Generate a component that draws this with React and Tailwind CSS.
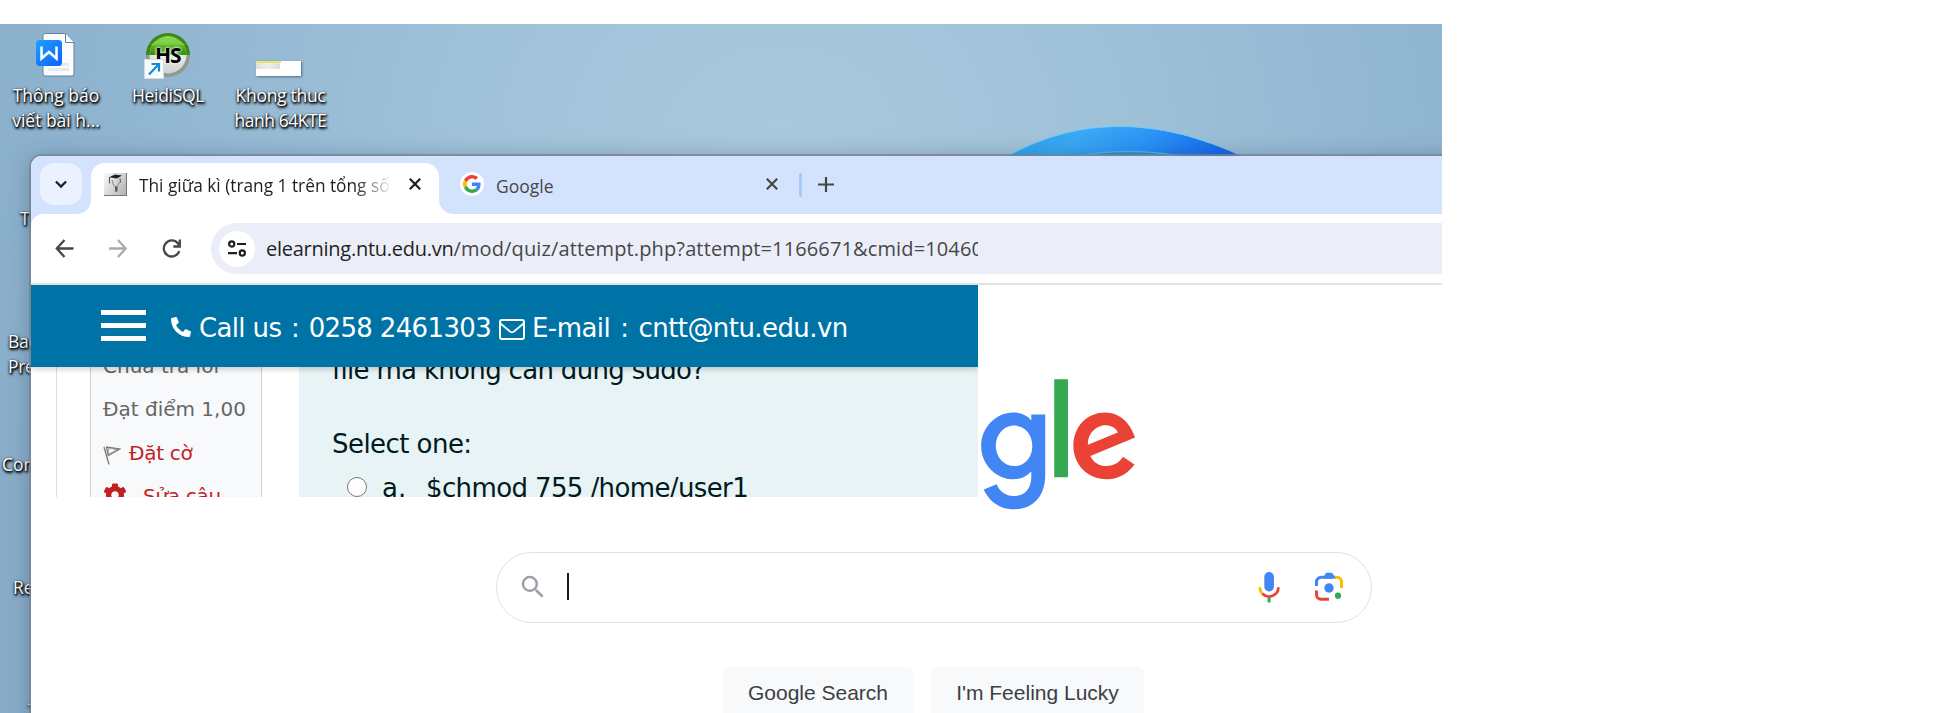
import React from "react";
import { FaPhone, FaCog } from "react-icons/fa";
import { MdSearch } from "react-icons/md";

const shadowText =
  "[text-shadow:1px_1px_2px_#000,0_1px_3px_#000,1px_2px_3px_rgba(0,0,0,0.7)]";

function DesktopLabel({ className, children }) {
  return (
    <div
      className={`absolute whitespace-pre text-center font-['Open_Sans','Noto_Sans',sans-serif] text-[17.5px] leading-[25px] text-white ${shadowText} ${className}`}
    >
      {children}
    </div>
  );
}

function WordIcon() {
  return (
    <svg className="absolute left-[35px] top-[8px]" width="42" height="46" viewBox="0 0 42 46">
      <defs>
        <linearGradient id="word" x1="0" y1="0" x2="1" y2="1">
          <stop offset="0" stopColor="#1ea0ff" />
          <stop offset="1" stopColor="#0b62ff" />
        </linearGradient>
      </defs>
      <path d="M10 1.500h20.500L39 10.500V42a2 2 0 0 1-2 2H10a2 2 0 0 1-2-2V3.500a2 2 0 0 1 2-2z" fill="#fbfcfe" stroke="#66829f" />
      <path d="M30.500 1.500V10.500H39" fill="#fff" stroke="#66829f" />
      <path d="M27 32.500h7M13 37.500h21" stroke="#e6e9ee" strokeWidth="2.800" />
      <rect x="1" y="8" width="26" height="26" rx="3.500" fill="url(#word)" />
      <path d="M6.500 14.500v12l7.500-6.500 7.500 6.500v-12" fill="none" stroke="#fff" strokeWidth="2.500" />
    </svg>
  );
}

function HeidiIcon() {
  return (
    <div className="absolute left-[143px] top-[8px] h-[48px] w-[50px]">
      <svg width="50" height="48" viewBox="0 0 50 48">
        <defs>
          <linearGradient id="hg" x1="0" y1="0" x2="0" y2="1">
            <stop offset="0" stopColor="#8bdc4f" />
            <stop offset="1" stopColor="#2f8a04" />
          </linearGradient>
          <linearGradient id="hw" x1="0" y1="0" x2="0" y2="1">
            <stop offset="0" stopColor="#fff" />
            <stop offset="1" stopColor="#cfd2ce" />
          </linearGradient>
        </defs>
        <circle cx="25" cy="23" r="22" fill="#92998c" />
        <path d="M3 23a22 22 0 0 1 44 0z" fill="#3c8a14" />
        <circle cx="25" cy="23" r="18.500" fill="url(#hw)" />
        <path d="M6.500 23a18.500 18.500 0 0 1 37 0z" fill="url(#hg)" />
        <path d="M7 13a21 12 0 0 1 36 0z" fill="#9be36a" opacity=".4" />
      </svg>
      <span className="absolute left-[12px] top-[10px] font-['Open_Sans','Noto_Sans',sans-serif] text-[21px] font-bold leading-[26px] tracking-[-1px] text-black [text-shadow:0_0_3px_#fff,0_0_3px_#e9ffd9]">
        HS
      </span>
      <svg className="absolute left-[1px] top-[27px]" width="20" height="20" viewBox="0 0 20 20">
        <rect x=".5" y=".5" width="19" height="19" fill="#fafbfd" stroke="#d3dbe8" />
        <path d="M5 15.500 14 6M7.500 5H15v7.500" fill="none" stroke="#118bd8" strokeWidth="2.200" />
      </svg>
    </div>
  );
}

function Desktop() {
  return (
    <>
      <svg className="absolute left-[990px] top-[90px]" width="270" height="50" viewBox="990 114 270 50">
        <defs>
          <linearGradient id="bloom" x1="0" y1="0" x2="1" y2="0.150">
            <stop offset="0" stopColor="#2aa0ea" />
            <stop offset=".35" stopColor="#3aa9f3" />
            <stop offset=".65" stopColor="#2b93f6" />
            <stop offset="1" stopColor="#1468ea" />
          </linearGradient>
        </defs>
        <path d="M1004 158Q1060 126 1120 126.500Q1180 127 1245 158z" fill="url(#bloom)" />
        <path d="M1004 158Q1060 126 1120 126.500Q1168 127 1210 143" fill="none" stroke="#6fcdf8" strokeWidth="1.200" />
        <path d="M1078 156Q1128 147 1180 156z" fill="#3288cf" stroke="#45b8f5" strokeWidth="1.500" />
      </svg>
      <WordIcon />
      <HeidiIcon />
      <div className="absolute left-[256px] top-[37px] h-[15px] w-[45px] bg-white shadow-[1px_1px_2px_rgba(40,60,90,0.6)]">
        <div className="h-[2px] w-[25px] bg-[#e8e56a]" />
        <div className="h-[6px] w-[24px] bg-gradient-to-r from-[#dededa] via-[#efefef] to-[#dcdcdc]" />
      </div>
      <DesktopLabel className="left-[6px] top-[59px] w-[100px]">{"Thông báo\nviết bài h..."}</DesktopLabel>
      <DesktopLabel className="left-[118px] top-[59px] w-[100px] tracking-[-0.3px]">HeidiSQL</DesktopLabel>
      <DesktopLabel className="left-[230px] top-[59px] w-[101px] tracking-[-0.3px]">
        Khong thuc{"\n"}
        <span className="tracking-[-0.45px]">hanh 64KTE</span>
      </DesktopLabel>
      <DesktopLabel className="left-[20px] top-[182px]">Th</DesktopLabel>
      <DesktopLabel className="left-[8px] top-[305px] text-left tracking-[-0.3px]">{"Back\nPrem"}</DesktopLabel>
      <DesktopLabel className="left-[2px] top-[428px]">Com</DesktopLabel>
      <DesktopLabel className="left-[13px] top-[551px]">Rec</DesktopLabel>
      <DesktopLabel className="left-[28px] top-[674px]">T</DesktopLabel>
    </>
  );
}

function GoogleG() {
  return (
    <svg width="18" height="18" viewBox="0 0 48 48">
      <path fill="#EA4335" d="M24 9.500c3.540 0 6.710 1.220 9.210 3.600l6.850-6.850C35.900 2.380 30.470 0 24 0 14.620 0 6.510 5.380 2.560 13.220l7.980 6.190C12.430 13.720 17.740 9.500 24 9.500z" />
      <path fill="#4285F4" d="M46.980 24.550c0-1.570-.15-3.090-.38-4.550H24v9.020h12.940c-.58 2.960-2.260 5.480-4.780 7.180l7.730 6c4.510-4.180 7.090-10.360 7.090-17.650z" />
      <path fill="#FBBC05" d="M10.530 28.590c-.48-1.450-.76-2.990-.76-4.590s.27-3.140.76-4.590l-7.980-6.190C.92 16.460 0 20.120 0 24c0 3.880.92 7.540 2.560 10.780l7.970-6.190z" />
      <path fill="#34A853" d="M24 48c6.480 0 11.930-2.130 15.890-5.810l-7.730-6c-2.150 1.450-4.920 2.300-8.160 2.300-6.260 0-11.570-4.220-13.470-9.910l-7.980 6.190C6.510 42.620 14.620 48 24 48z" />
    </svg>
  );
}

function Cross({ color }) {
  return (
    <svg width="12" height="12" viewBox="0 0 12 12" className="shrink-0">
      <path d="M.8.8 11.200 11.200M11.200.8.8 11.200" stroke={color} strokeWidth="2.200" fill="none" />
    </svg>
  );
}

function TabStrip() {
  return (
    <div className="flex h-[58px] bg-[#d3e2fd] pt-[7px]">
      <div className="ml-[9px] flex h-[42px] w-[42px] items-center justify-center rounded-[14px] bg-[#ebf1fe]">
        <svg width="12" height="9" viewBox="0 0 12 9">
          <path d="M.9 1.500 6 6.600l5.100-5.100" fill="none" stroke="#1f1f1f" strokeWidth="2.300" />
        </svg>
      </div>
      <svg className="ml-[-6px] mt-[36px]" width="15" height="15" viewBox="0 0 15 15">
        <path d="M15 0v15H0C9 15 15 9 15 0z" fill="#fff" />
      </svg>
      <div className="flex h-[51px] w-[348px] items-start rounded-t-[14px] bg-white">
        <svg className="ml-[13px] mt-[10px] shrink-0" width="23" height="23" viewBox="0 0 23 23">
          <defs>
            <linearGradient id="fav" x1="0" y1="0" x2="1" y2="0.600">
              <stop offset="0" stopColor="#fbfbfb" />
              <stop offset="1" stopColor="#b9b9b9" />
            </linearGradient>
          </defs>
          <rect width="23" height="23" fill="url(#fav)" />
          <path d="M0 22.500h22.500V0" fill="none" stroke="#777" />
          <path d="M5 4.200 11 1.500l7 1-5 3z" fill="#222" />
          <path d="M5.500 4v6.500M16 5.500l.5 4" fill="none" stroke="#555" strokeWidth="1.100" />
          <path d="M8 7l1.500 5 2.500 2M15.500 9l-2.300 4.500" fill="none" stroke="#888" strokeWidth="1" />
          <path d="M11.500 13.500l.6 5.500M13 13.500l-.3 5" fill="none" stroke="#555" strokeWidth="1.300" />
        </svg>
        <div className="ml-3 mt-[10px] w-[251px] overflow-hidden whitespace-nowrap font-['Open_Sans','Noto_Sans',sans-serif] text-[17.3px] leading-[26px] text-[#1f1f1f] [mask-image:linear-gradient(to_right,#000_86%,transparent_101%)]">
          Thi giữa kì (trang 1 trên tổng số
        </div>
        <div className="ml-[19px] mt-[15px]"><Cross color="#1f1f1f" /></div>
      </div>
      <svg className="mt-[36px]" width="15" height="15" viewBox="0 0 15 15">
        <path d="M0 0v15h15C6 15 0 9 0 0z" fill="#fff" />
      </svg>
      <div className="ml-[6px] mt-[9px] flex h-6 w-6 items-center justify-center rounded-full bg-white">
        <GoogleG />
      </div>
      <div className="ml-[12px] mt-[10px] w-[270px] font-['Open_Sans','Noto_Sans',sans-serif] text-[17.5px] leading-[26px] text-[#474747]">
        Google
      </div>
      <div className="mt-[15px]"><Cross color="#474747" /></div>
      <div className="ml-[21px] mt-[10px] h-6 w-[3px] rounded-full bg-[#a8c7fa]" />
      <svg className="ml-4 mt-[14px]" width="16" height="15" viewBox="0 0 16 15">
        <path d="M8 0v15M0 7.500h16" stroke="#474747" strokeWidth="2.200" />
      </svg>
    </div>
  );
}

function Toolbar() {
  return (
    <div className="bg-[#d3e2fd]">
      <div className="flex h-[71px] items-start rounded-tl-[12px] border-b-2 border-[#e1e2e3] bg-white pt-[9px]">
        <svg className="ml-6 mt-4" width="19" height="19" viewBox="0 0 19 19">
          <path d="M9.500 1 1.800 9.500l7.700 8.500M2 9.500h16.500" fill="none" stroke="#474747" strokeWidth="2.300" />
        </svg>
        <svg className="ml-[34px] mt-4" width="19" height="19" viewBox="0 0 19 19">
          <path d="M10 1l7.700 8.500L10 18M17.500 9.500H1" fill="none" stroke="#ababab" strokeWidth="2.300" />
        </svg>
        <svg className="ml-[35px] mt-4" width="19" height="19" viewBox="0 0 19 19">
          <path d="M17.300 12.200A8 8 0 1 1 15.800 4.200L17.300 6.500M17.800 .5v7h-6.500" fill="none" stroke="#474747" strokeWidth="2.300" />
        </svg>
        <div className="ml-[30px] flex h-[51px] flex-1 items-center rounded-l-full bg-[#ebeef8] pl-2">
          <div className="flex h-9 w-9 shrink-0 items-center justify-center rounded-full bg-white">
            <svg width="20" height="17" viewBox="0 0 20 17">
              <g fill="none" stroke="#1f1f1f" strokeWidth="2.200">
                <circle cx="4.700" cy="4" r="2.600" />
                <path d="M10 4h9M1 13.200h9" />
                <circle cx="15.300" cy="13" r="2.600" />
              </g>
            </svg>
          </div>
          <div className="ml-[11px] w-[712px] overflow-hidden whitespace-nowrap font-['Open_Sans','Noto_Sans',sans-serif] text-[20px] leading-[30px] text-[#474747]">
            <span className="tracking-[-0.26px] text-[#1f1f1f]">elearning.ntu.edu.vn</span>
            <span className="tracking-[0.13px]">/mod/quiz/attempt.php?attempt=1166671&amp;cmid=10460</span>
          </div>
        </div>
      </div>
    </div>
  );
}

function SiteHeader() {
  return (
    <div className="relative z-10 flex h-[82px] items-start whitespace-pre bg-[#0073a6] font-['DejaVu_Sans',sans-serif] text-[26px] leading-[30px] text-white shadow-[0_2px_6px_rgba(0,0,0,0.2)] [clip-path:inset(0_0_-10px_0)]">
      <div className="ml-[70px] mt-[25px] flex w-[45px] flex-col gap-2">
        <div className="h-[5px] bg-white" />
        <div className="h-[5px] bg-white" />
        <div className="h-[5px] bg-white" />
      </div>
      <FaPhone className="ml-[25px] mt-[32px] h-[20px] w-[20px] -scale-x-100" />
      <span className="ml-2 mt-[28px] w-[300px] tracking-[-0.65px]">
        Call us <span className="px-[2px]">:</span> 0258 2461303
      </span>
      <svg className="mt-[34px]" width="26" height="21" viewBox="0 0 26 21">
        <rect x="1" y="1" width="24" height="19" rx="2" fill="none" stroke="#fff" strokeWidth="2" />
        <path d="M1.500 4.500 11 12.500q2 1.500 4 0l9.500-8" fill="none" stroke="#fff" strokeWidth="1.800" />
      </svg>
      <span className="ml-[7px] mt-[28px] tracking-[-0.58px]">
        E-mail <span className="px-[2.500px]">:</span> cntt@ntu.edu.vn
      </span>
    </div>
  );
}

function Quiz() {
  return (
    <div className="flex h-[130px] overflow-hidden font-['DejaVu_Sans',sans-serif]">
      <div className="ml-[25px] w-px bg-[#dcdfe2]" />
      <div className="ml-[33px] w-[172px] shrink-0 border-x border-[#cad0d7] bg-[#f8f9fa] pl-[12px] text-[20px] leading-6 text-[#666]">
        <div className="mt-[-13px] h-[43px] whitespace-nowrap">Chưa trả lời</div>
        <div className="h-[44px] whitespace-nowrap">Đạt điểm 1,00</div>
        <div className="flex h-[42px] text-[#c1201f]">
          <svg className="mt-[5px]" width="18" height="19" viewBox="0 0 18 19">
            <path d="M1 1l5 17.500M3.500 1l1.800 8.500L16.500 3z" fill="none" stroke="#777" strokeWidth="1.300" />
            <path d="M5.500 2.500 14 3.500 6 8z" fill="#fff" stroke="#999" strokeWidth=".8" />
          </svg>
          <span className="ml-2 tracking-[-0.3px]">Đặt cờ</span>
        </div>
        <div className="flex text-[#c1201f]">
          <FaCog className="h-[24px] w-[24px]" />
          <span className="ml-[16px] mt-px tracking-[-0.3px]">Sửa câu</span>
        </div>
      </div>
      <div className="ml-[37px] flex-1 bg-[#e7f3f5] pl-[33px] text-[26px] leading-[30px] text-[#001a1e]">
        <div className="mt-[-12px] h-[74px] whitespace-nowrap tracking-[-0.68px]">file mà không cần dùng sudo?</div>
        <div className="h-[44px] tracking-[-0.55px]">Select one:</div>
        <div className="flex">
          <div className="ml-[15px] mt-[4px] h-5 w-5 rounded-full border-[1.5px] border-[#767676] bg-white" />
          <span className="ml-[15px] w-[44px]">a.</span>
          <span className="whitespace-nowrap tracking-[-0.62px]">$chmod 755 /home/user1</span>
        </div>
      </div>
    </div>
  );
}

function LogoTail() {
  return (
    <svg className="absolute left-[950px] top-[216px]" width="160" height="144" viewBox="0 0 160 144">
      <g transform="translate(-251 2.700) scale(1.508)">
        <path fill="#4285F4" d="M209.050 26.340v39.820c0 16.380-9.660 23.070-21.080 23.070-10.750 0-17.220-7.190-19.660-13.070l8.480-3.530c1.510 3.610 5.210 7.870 11.170 7.870 7.310 0 11.840-4.510 11.840-13v-3.190h-.34c-2.180 2.690-6.380 5.040-11.680 5.040-11.090 0-21.250-9.660-21.250-22.090 0-12.520 10.160-22.260 21.250-22.260 5.290 0 9.490 2.350 11.680 4.960h.34v-3.610h9.250zm-8.560 20.920c0-7.810-5.210-13.520-11.840-13.520-6.720 0-12.350 5.710-12.350 13.520 0 7.730 5.630 13.360 12.350 13.360 6.630 0 11.840-5.630 11.840-13.360z" />
        <rect x="215" y="3" width="9.100" height="65" fill="#34A853" />
        <path fill="#EA4335" d="M260.620 54.480l7.560 5.040c-2.440 3.610-8.320 9.830-18.480 9.830-12.600 0-22.010-9.740-22.010-22.180 0-13.190 9.490-22.180 20.920-22.180 11.510 0 17.140 9.160 18.980 14.110l1.010 2.520-29.650 12.280c2.270 4.450 5.800 6.720 10.750 6.720 4.960 0 8.400-2.440 10.920-6.140zm-23.270-7.980l19.820-8.230c-1.090-2.770-4.370-4.700-8.230-4.700-4.950 0-11.840 4.370-11.590 12.930z" />
      </g>
    </svg>
  );
}

function GoogleSearch() {
  return (
    <div className="pt-[55px]">
      <div className="ml-[465px] flex h-[71px] w-[876px] items-center rounded-full border border-[#dfe1e5] bg-white">
        <MdSearch className="ml-[21px] mt-[-2px] h-[30px] w-[30px] text-[#9aa0a6]" />
        <div className="ml-[19px] mt-[-2px] h-[27px] w-[2px] bg-[#1f1f1f]" />
        <svg className="ml-[689px] mt-[-1px]" width="22" height="31" viewBox="0 0 22 31">
          <rect x="6.300" y="0" width="9.600" height="19.500" rx="4.800" fill="#4285f4" />
          <path d="M1.800 15.200a9.200 9.200 0 0 0 3.200 7" fill="none" stroke="#fbbc04" strokeWidth="2.700" />
          <path d="M4.500 21.700a9.300 9.300 0 0 0 15.900-6.500" fill="none" stroke="#ea4335" strokeWidth="2.700" />
          <path d="M11.100 25.500v5" stroke="#34a853" strokeWidth="3" />
        </svg>
        <svg className="ml-[35px] mt-[-3px]" width="28" height="29" viewBox="0 0 28 29">
          <g fill="none" strokeWidth="3">
            <path d="M1.500 14V10A4.800 4.800 0 0 1 6.300 5.200H18" stroke="#4285f4" />
            <path d="M19 5.200h2.700a4.800 4.800 0 0 1 4.800 4.800v6" stroke="#fbbc04" />
            <path d="M1.500 18.500v4.200a4.500 4.500 0 0 0 4.500 4.500h8" stroke="#ea4335" />
          </g>
          <path d="M8 6.500 10.500 1.500Q11 .8 12 .8h4q1 0 1.600.8L21 6.500z" fill="#4285f4" />
          <circle cx="14" cy="16" r="4.700" fill="#4285f4" />
          <circle cx="23" cy="23.700" r="3.100" fill="#34a853" />
        </svg>
      </div>
      <div className="ml-[692px] mt-[44px] flex gap-[18px] whitespace-nowrap font-['Liberation_Sans',Arial,sans-serif] text-[21px] leading-6 text-[#3c4043]">
        <div className="h-[54px] w-[190px] rounded-[6px] bg-[#f8f9fa] pt-[14px] text-center">Google Search</div>
        <div className="h-[54px] w-[213px] rounded-[6px] bg-[#f8f9fa] pt-[14px] text-center">I'm Feeling Lucky</div>
      </div>
    </div>
  );
}

export default function App() {
  return (
    <div className="h-[713px] w-[1943px] overflow-hidden bg-white pt-6">
      <div className="relative h-[689px] w-[1442px] overflow-hidden bg-[#88acc8] bg-[radial-gradient(ellipse_900px_700px_at_780px_110px,#a9c8dd_0%,#a0c2d9_35%,#8db3cf_80%,#88acc8_100%)]">
        <Desktop />
        <div className="absolute left-[31px] top-[132px] h-[600px] w-[1440px] rounded-tl-[11px] bg-white shadow-[0_0_0_2px_rgba(118,132,145,0.75),0_2px_22px_rgba(30,50,80,0.35)]">
          <div className="w-[1411px] overflow-hidden rounded-tl-[10px]">
            <TabStrip />
            <Toolbar />
            <div className="w-[947px]">
              <SiteHeader />
              <Quiz />
            </div>
            <GoogleSearch />
          </div>
          <LogoTail />
        </div>
      </div>
    </div>
  );
}
